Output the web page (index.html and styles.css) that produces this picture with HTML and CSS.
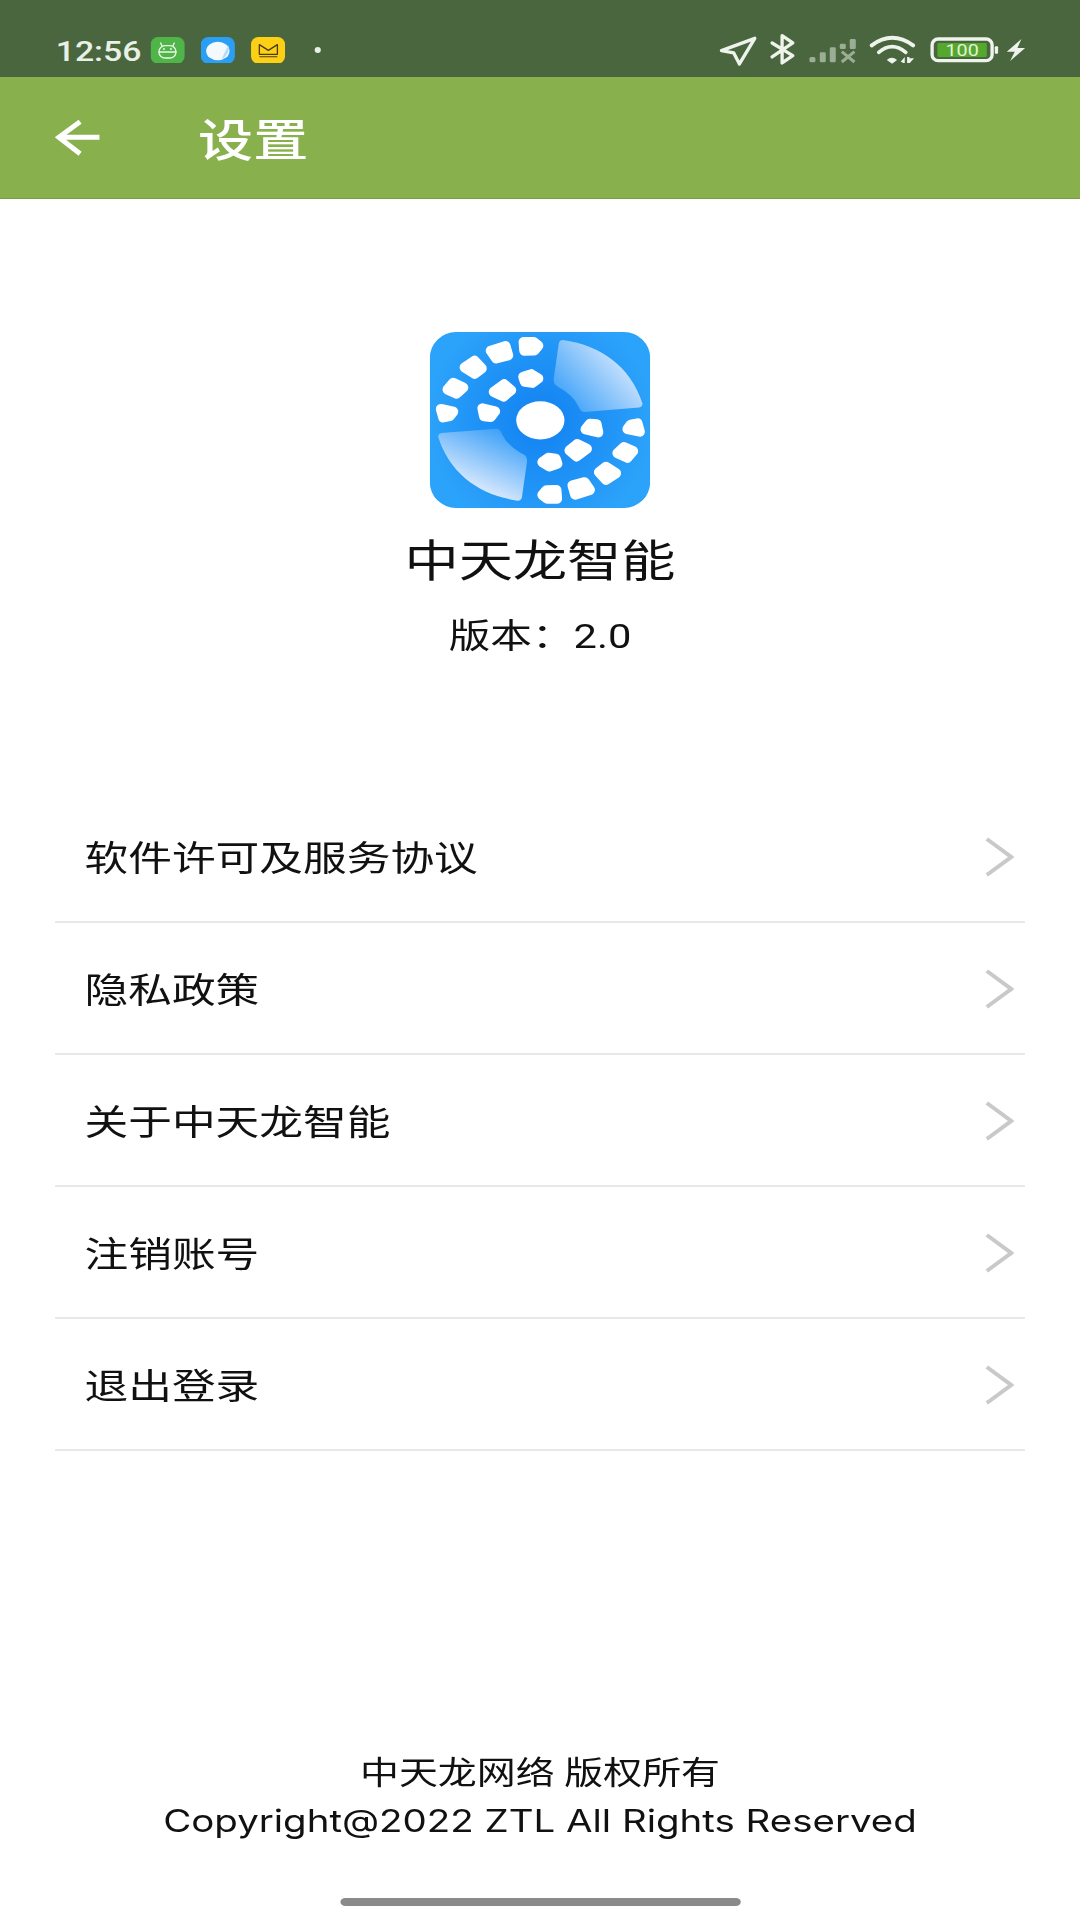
FILE: index.html
```html
<!DOCTYPE html>
<html lang="zh-CN">
<head>
  <meta charset="utf-8"/>
  <meta name="viewport" content="width=device-width, initial-scale=1.0"/>
  <title>设置</title>
  <link rel="stylesheet" href="styles.css">
</head>
<body>
  <div class="screen">
    <div class="status-bar">
      <span class="time">12:56</span>
      <svg class="notif" viewBox="453 110 102 80" preserveAspectRatio="none">
        <rect x="453" y="110" width="102" height="80" rx="22" fill="#4fb548"/>
        <g fill="none" stroke="#e9f6e4" stroke-width="4" stroke-linecap="round">
          <rect x="478" y="136" width="51" height="37" rx="18"/>
          <path d="M487 136 L483 128 M520 136 L524 128 M478 155 H529"/>
        </g>
        <circle cx="493" cy="146" r="3" fill="#e9f6e4"/>
        <circle cx="514" cy="146" r="3" fill="#e9f6e4"/>
      </svg>
      <svg class="notif" viewBox="603 110 102 80" preserveAspectRatio="none">
        <rect x="603" y="110" width="102" height="80" rx="22" fill="#2a9ff3"/>
        <ellipse cx="654" cy="152" rx="35" ry="28" fill="#f4f9fe"/>
        <path d="M664 178 L686 134 Q692 162 664 178 Z" fill="#b5dcf8"/>
      </svg>
      <svg class="notif" viewBox="753 110 102 80" preserveAspectRatio="none">
        <rect x="753" y="110" width="102" height="80" rx="22" fill="#fdd016"/>
        <path d="M778 133 L805 150 L832 133 V162 H778 Z" fill="none" stroke="#4a3d12" stroke-width="4" stroke-linejoin="round"/>
        <path d="M778 169 H832" stroke="#4a3d12" stroke-width="3"/>
      </svg>
      <span class="dot"></span>
      <svg class="status-icons" viewBox="115 100 925 100" preserveAspectRatio="none">
        <g fill="none" stroke="#eef3ec" stroke-width="10" stroke-linejoin="round" stroke-linecap="round">
          <path d="M123 153 L223 116 L177 193 L160 160 Z"/>
          <path d="M275 130 L337 168 L305 190 V108 L337 130 L275 172"/>
        </g>
        <g fill="#eef3ec" opacity="0.5">
          <rect x="387" y="172" width="18" height="16" rx="5"/>
          <rect x="418" y="158" width="18" height="30" rx="4"/>
          <rect x="448" y="143" width="18" height="45" rx="4"/>
          <rect x="478" y="132" width="18" height="16" rx="4"/>
          <rect x="508" y="118" width="18" height="30" rx="4"/>
          <path d="M484 156 L522 187 M522 156 L484 187" fill="none" stroke="#eef3ec" stroke-width="9"/>
        </g>
        <g fill="none" stroke="#eef3ec" stroke-linecap="round">
          <path d="M574 137 Q635 92 698 137" stroke-width="12"/>
          <path d="M595 158 Q635 124 676 158" stroke-width="11"/>
        </g>
        <g fill="#eef3ec">
          <path d="M619 181 Q634 168 650 181 L635 192 Z"/>
          <path d="M660 187 L673 172 V190 H666 V187 Z M680 172 H687 V176 L701 176 L688 190 H680 Z"/>
        </g>
        <rect x="755" y="118" width="180" height="65" rx="18" fill="none" stroke="#eef3ec" stroke-width="10"/>
        <rect x="771" y="130" width="148" height="42" rx="4" fill="#55a82e"/>
        <text class="battery-text" x="795" y="170" textLength="100" lengthAdjust="spacingAndGlyphs">100</text>
        <rect x="943" y="140" width="10" height="22" rx="3" fill="#eef3ec"/>
        <path d="M1023 118 L979 156 L1003 156 L989 184 L1034 145 L1011 145 Z" fill="#eef3ec"/>
      </svg>
    </div>

    <header class="app-bar">
      <svg class="back" viewBox="165 360 135 110" preserveAspectRatio="none">
        <path d="M298 415 H180 M240 368 L176 415 L240 464" fill="none" stroke="#fff" stroke-width="15"/>
      </svg>
      <h1>设置</h1>
    </header>

    <section class="about">
      <svg class="logo" viewBox="90 66 658 526" preserveAspectRatio="none">
        <defs>
          <radialGradient id="logo-bg" gradientUnits="userSpaceOnUse" cx="420" cy="330" r="340">
            <stop offset="0" stop-color="#1282f1"/>
            <stop offset="0.55" stop-color="#1f92f6"/>
            <stop offset="1" stop-color="#2ca3fa"/>
          </radialGradient>
          <linearGradient id="fan-a" gradientUnits="userSpaceOnUse" x1="500" y1="290" x2="680" y2="130">
            <stop offset="0" stop-color="#3ea2f9"/>
            <stop offset="1" stop-color="#dbeafd"/>
          </linearGradient>
          <linearGradient id="fan-b" gradientUnits="userSpaceOnUse" x1="325" y1="365" x2="245" y2="545">
            <stop offset="0" stop-color="#3a9ff8"/>
            <stop offset="1" stop-color="#dbeafd"/>
          </linearGradient>
          <g id="blocks" fill="#fff" stroke="#fff" stroke-width="30" stroke-linejoin="round">
            <polygon points="370,96 400,96 414,107 402,121 372,122"/>
            <polygon points="272,122 316,108 324,136 288,145"/>
            <polygon points="194,172 224,152 245,175 224,191"/>
            <polygon points="143,238 160,218 190,232 170,250"/>
            <polygon points="123,296 160,304 150,317 130,321"/>
            <polygon points="369,200 393,192 414,205 396,218 374,215"/>
            <polygon points="281,245 312,222 333,240 310,259"/>
            <polygon points="247,294 285,303 272,320 252,318"/>
          </g>
        </defs>
        <rect x="90" y="66" width="658" height="526" rx="78" fill="url(#logo-bg)"/>
        <path d="M487 90 C600 105 690 170 725 280 Q725 290 715 292 L552 305 Q540 305 535 290 Q520 255 470 228 Q458 222 460 205 L475 100 Q477 90 487 90 Z" fill="url(#fan-a)"/>
        <path d="M353 570 C240 555 150 490 115 380 Q115 370 125 368 L288 355 Q300 355 305 370 Q320 405 370 432 Q382 438 380 455 L365 560 Q363 570 353 570 Z" fill="url(#fan-b)"/>
        <use href="#blocks"/>
        <use href="#blocks" transform="rotate(180 420 330)"/>
        <ellipse cx="420" cy="330" rx="72" ry="57" fill="#fff"/>
      </svg>
      <h2>中天龙智能</h2>
      <p class="version">版本：2.0</p>
    </section>

    <ul class="menu">
      <li>软件许可及服务协议<svg class="chevron" viewBox="0 0 87 120" preserveAspectRatio="none"><path d="M7 6 L80 60 L7 114"/></svg></li>
      <li>隐私政策<svg class="chevron" viewBox="0 0 87 120" preserveAspectRatio="none"><path d="M7 6 L80 60 L7 114"/></svg></li>
      <li>关于中天龙智能<svg class="chevron" viewBox="0 0 87 120" preserveAspectRatio="none"><path d="M7 6 L80 60 L7 114"/></svg></li>
      <li>注销账号<svg class="chevron" viewBox="0 0 87 120" preserveAspectRatio="none"><path d="M7 6 L80 60 L7 114"/></svg></li>
      <li>退出登录<svg class="chevron" viewBox="0 0 87 120" preserveAspectRatio="none"><path d="M7 6 L80 60 L7 114"/></svg></li>
    </ul>

    <footer>
      <p>中天龙网络 版权所有</p>
      <p class="copyright">Copyright@2022 ZTL All Rights Reserved</p>
      <div class="home-bar"></div>
    </footer>
  </div>
</body>
</html>
```

FILE: styles.css
```css
body {
  margin: 0;
  background: #fff;
  overflow: hidden;
}

/* the capture is stretched sideways, so lay out at 882 wide and widen it */
.screen {
  display: flex;
  flex-direction: column;
  width: 882px;
  height: 1920px;
  transform: scaleX(1.22449);
  transform-origin: left top;
  font-family: Roboto, "Noto Sans CJK SC", sans-serif;
  color: #111;
}

.status-bar {
  display: flex;
  align-items: center;
  height: 54px;
  padding: 23px 43px 0 45.5px;
  background: #4a663f;
}
.time {
  width: 69.5px;
  margin: 2px 8px 0 0;
  color: #e9f0e6;
  font-size: 27.6px;
  font-weight: 500;
}
.notif {
  width: 27.8px;
  height: 26.7px;
  margin-right: 13.2px;
}
.dot {
  width: 5px;
  height: 6px;
  margin-left: 11px;
  border-radius: 50%;
  background: #e9f0e6;
}
.status-icons {
  width: 251.8px;
  height: 33.3px;
  margin-left: auto;
}
.battery-text {
  font-family: Roboto, sans-serif;
  font-size: 49px;
  fill: #e4f2d8;
}

.app-bar {
  display: flex;
  align-items: center;
  gap: 80px;
  height: 122px;
  padding-left: 45px;
  background: #88b04d;
  border-bottom: 1px solid #7b9f48;
  box-sizing: border-box;
}
.back {
  width: 36.75px;
  height: 36.7px;
}
.app-bar h1 {
  margin: 0;
  color: #fff;
  font-size: 45px;
  font-weight: 500;
}

.about {
  display: flex;
  flex-direction: column;
  align-items: center;
  padding-top: 133px;
}
.logo {
  width: 180px;
  height: 176px;
}
.about h2 {
  margin: 23px 0 0;
  font-size: 44.3px;
  font-weight: 400;
  line-height: 62px;
}
.version {
  margin: 19px 0 0;
  font-family: Roboto, "Noto Sans CJK TC", sans-serif;
  font-size: 34px;
  line-height: 48px;
}

.menu {
  margin: 131px 45px 0;
  padding: 0;
  list-style: none;
}
.menu li {
  display: flex;
  align-items: center;
  justify-content: space-between;
  height: 132px;
  padding: 0 9px 2px 24px;
  border-bottom: 2px solid #e8e8e8;
  box-sizing: border-box;
  font-size: 35.7px;
}
.chevron {
  width: 23.7px;
  height: 40px;
  margin-top: 4px;
}
.chevron path {
  fill: none;
  stroke: #c9c9cb;
  stroke-width: 12;
}

footer {
  display: flex;
  flex-direction: column;
  align-items: center;
  margin-top: auto;
  padding-bottom: 14px;
  text-align: center;
  font-size: 31.8px;
  line-height: 48px;
}
footer p {
  margin: 0;
}
.copyright {
  font-family: Inter, "Noto Sans CJK SC", sans-serif;
  font-size: 31.4px;
}
.home-bar {
  width: 327px;
  height: 8px;
  margin-top: 53px;
  border-radius: 4px;
  background: #8a8a8a;
}
```
